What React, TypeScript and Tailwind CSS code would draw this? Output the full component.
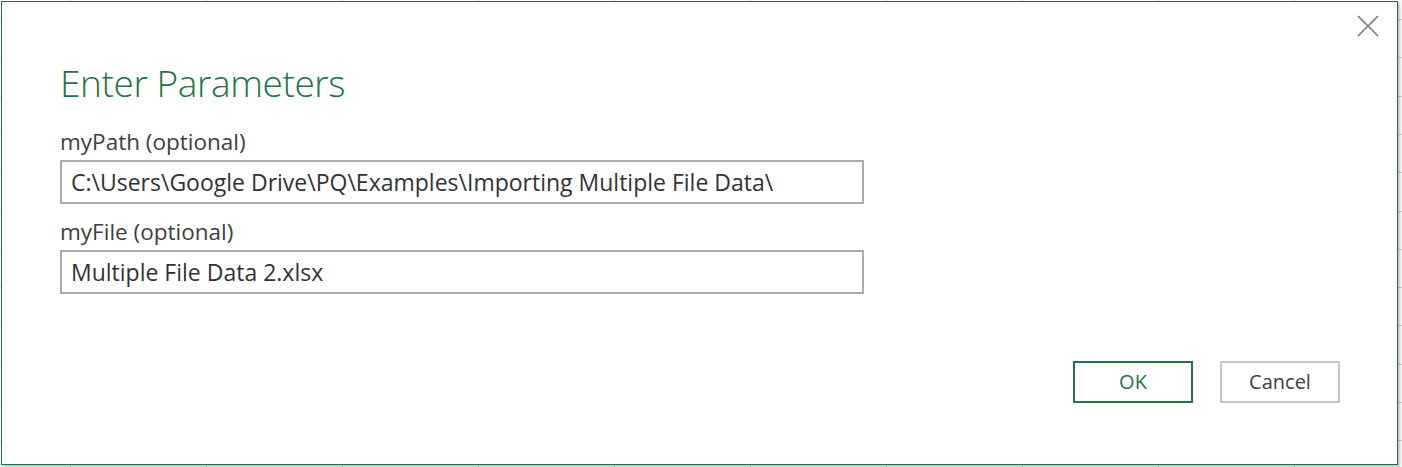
import React from 'react';

const fieldFont = { fontFamily: '"Open Sans", "Noto Sans", sans-serif' };

function SheetGrid() {
  const cols = Array.from({ length: 11 }, (_, i) => 70 + i * 136);
  const rows = Array.from({ length: 13 }, (_, i) => 19 + i * 38.3);
  return (
    <svg className="absolute inset-0" width="1402" height="467">
      {cols.map((x) => (
        <line key={'c' + x} x1={x + 0.5} y1={0} x2={x + 0.5} y2={467} stroke="#d4d4d4" />
      ))}
      {rows.map((y) => (
        <line key={'r' + y} x1={0} y1={Math.round(y) + 0.5} x2={1402} y2={Math.round(y) + 0.5} stroke="#d4d4d4" />
      ))}
    </svg>
  );
}

function Field({ label, value, first }: { label: string; value: string; first?: boolean }) {
  return (
    <div className={first ? 'flex flex-col' : 'flex flex-col mt-[16px]'}>
      <label className="text-[22.5px] leading-[24px] text-[#404040]">{label}</label>
      <div className="mt-[6px] w-[804px] h-[44px] border-2 border-[#ababab] flex items-center px-[9px] text-[23px] text-[#333333]">
        {value}
      </div>
    </div>
  );
}

export default function App() {
  return (
    <div className="relative w-[1402px] h-[467px] bg-white overflow-hidden" style={fieldFont}>
      <SheetGrid />
      <div className="absolute left-[1px] top-[1px] w-[1397px] h-[464px] bg-white border border-[#217346] shadow-[2px_2px_2px_rgba(0,0,0,0.25)] flex flex-col pl-[58px] pr-[57px]">
        <button className="absolute right-[17px] top-[12px] w-[24px] h-[24px] flex items-center justify-center">
          <svg width="24" height="24" viewBox="0 0 24 24">
            <path d="M2 2 L22 22 M22 2 L2 22" stroke="#777777" strokeWidth="1.6" fill="none" />
          </svg>
        </button>

        <h1 className="mt-[56px] text-[37px] leading-[50px] font-light text-[#217346] tracking-[-0.4px]">
          Enter Parameters
        </h1>

        <div className="mt-[22px] flex flex-col">
          <Field first label="myPath (optional)" value="C:\Users\Google Drive\PQ\Examples\Importing Multiple File Data\" />
          <Field label="myFile (optional)" value="Multiple File Data 2.xlsx" />
        </div>

        <div className="mt-[67px] flex justify-end gap-[27px]">
          <button className="w-[120px] h-[42px] border-2 border-[#217346] text-[20px] text-[#217346]">OK</button>
          <button className="w-[120px] h-[42px] border-2 border-[#c6c6c6] text-[20px] text-[#404040]">Cancel</button>
        </div>
      </div>
    </div>
  );
}
